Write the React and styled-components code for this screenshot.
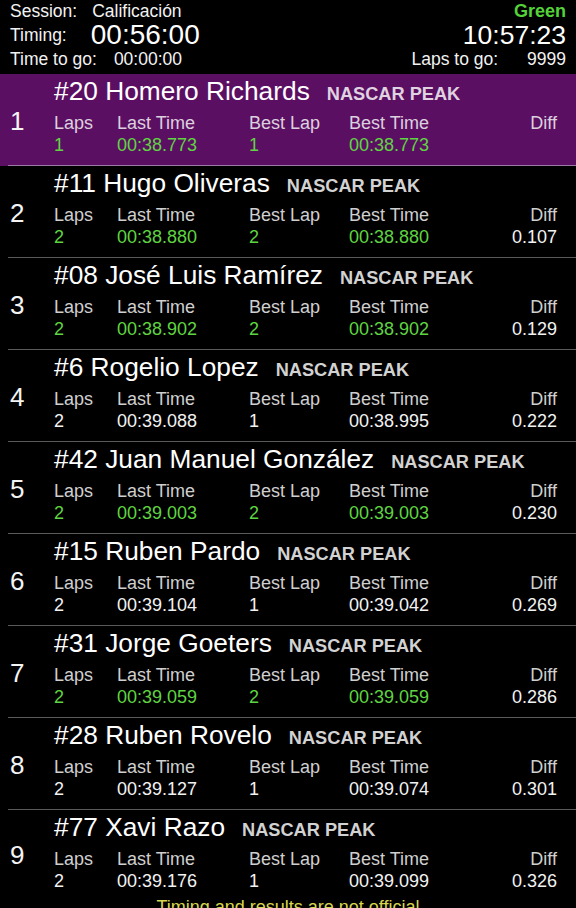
import React from "react";
import styled, { createGlobalStyle } from "styled-components";

const GlobalStyle = createGlobalStyle`
  html, body {
    margin: 0;
    padding: 0;
    background: #000;
    overflow: hidden;
  }
  body {
    font-family: "Liberation Sans", Arial, Helvetica, sans-serif;
    color: #fff;
  }
`;

const Screen = styled.div`
  width: 576px;
  height: 908px;
  background: #000;
  overflow: hidden;
`;

const Header = styled.header`
  display: flex;
  justify-content: space-between;
  padding: 0 10px 4px 10px;
  height: 70px;
`;

const HeaderCol = styled.div`
  display: flex;
  flex-direction: column;
  align-items: ${(p) => (p.$right ? "flex-end" : "flex-start")};
`;

const HeaderLine = styled.div`
  display: flex;
  align-items: center;
  gap: ${(p) => p.$gap || 0}px;
  height: ${(p) => (p.$big ? 26 : 22)}px;
  font-size: 17.5px;
  line-height: 22px;
  color: #f2f2f2;
  white-space: nowrap;
`;

const FlagText = styled.span`
  color: #55d23a;
  font-weight: bold;
  font-size: 18px;
`;

const BigClock = styled.span`
  font-size: ${(p) => p.$size}px;
  line-height: 26px;
  color: #fff;
`;

const Row = styled.div`
  background: ${(p) => (p.$leader ? "#5b0f63" : "#000")};
  padding-left: 8px;
`;

const RowInner = styled.div`
  display: grid;
  grid-template-columns: 46px 1fr;
  height: ${(p) => (p.$last ? 86 : 91)}px;
  border-bottom: ${(p) =>
    p.$last ? "none" : `1px solid ${p.$leader ? "#9a7aa2" : "#5a5a5a"}`};
`;

const Position = styled.div`
  display: flex;
  align-items: center;
  padding: 4px 0 0 2px;
  font-size: 26px;
  color: #f4f4f4;
`;

const Content = styled.div`
  display: flex;
  flex-direction: column;
  padding-top: 3px;
`;

const NameLine = styled.div`
  display: flex;
  align-items: baseline;
  gap: 17px;
  height: 28px;
  line-height: 28px;
  margin-bottom: 7px;
  white-space: nowrap;
`;

const DriverName = styled.span`
  font-size: 26.3px;
  color: #fff;
`;

const Team = styled.span`
  font-size: 18.2px;
  font-weight: bold;
  color: ${(p) => (p.$leader ? "rgba(255,255,255,0.82)" : "#d2d2d2")};
`;

const StatGrid = styled.div`
  display: grid;
  grid-template-columns: 63px 132px 100px 1fr 100px;
  padding-right: 19px;
  font-size: 18px;
  line-height: 22px;
  white-space: nowrap;
`;

const Label = styled.span`
  color: ${(p) => (p.$leader ? "#dcd0de" : "#cfcfcf")};
  text-align: ${(p) => (p.$right ? "right" : "left")};
`;

const Value = styled.span`
  color: ${(p) => (p.$green ? "#5fd442" : "#f2f2f2")};
  text-align: ${(p) => (p.$right ? "right" : "left")};
  min-height: 22px;
`;

const Footer = styled.div`
  text-align: center;
  font-size: 18px;
  line-height: 22px;
  color: #d9d64f;
`;

const rows = [
  { pos: 1, name: "#20 Homero Richards", laps: "1", last: "00:38.773", bestLap: "1", best: "00:38.773", diff: "", green: true },
  { pos: 2, name: "#11 Hugo Oliveras", laps: "2", last: "00:38.880", bestLap: "2", best: "00:38.880", diff: "0.107", green: true },
  { pos: 3, name: "#08 José Luis Ramírez", laps: "2", last: "00:38.902", bestLap: "2", best: "00:38.902", diff: "0.129", green: true },
  { pos: 4, name: "#6 Rogelio Lopez", laps: "2", last: "00:39.088", bestLap: "1", best: "00:38.995", diff: "0.222", green: false },
  { pos: 5, name: "#42 Juan Manuel González", laps: "2", last: "00:39.003", bestLap: "2", best: "00:39.003", diff: "0.230", green: true },
  { pos: 6, name: "#15 Ruben Pardo", laps: "2", last: "00:39.104", bestLap: "1", best: "00:39.042", diff: "0.269", green: false },
  { pos: 7, name: "#31 Jorge Goeters", laps: "2", last: "00:39.059", bestLap: "2", best: "00:39.059", diff: "0.286", green: true },
  { pos: 8, name: "#28 Ruben Rovelo", laps: "2", last: "00:39.127", bestLap: "1", best: "00:39.074", diff: "0.301", green: false },
  { pos: 9, name: "#77 Xavi Razo", laps: "2", last: "00:39.176", bestLap: "1", best: "00:39.099", diff: "0.326", green: false },
];

function DriverRow({ r, last }) {
  const leader = r.pos === 1;
  return (
    <Row $leader={leader}>
      <RowInner $leader={leader} $last={last}>
        <Position>{r.pos}</Position>
        <Content>
          <NameLine>
            <DriverName>{r.name}</DriverName>
            <Team $leader={leader}>NASCAR PEAK</Team>
          </NameLine>
          <StatGrid>
            <Label $leader={leader}>Laps</Label>
            <Label $leader={leader}>Last Time</Label>
            <Label $leader={leader}>Best Lap</Label>
            <Label $leader={leader}>Best Time</Label>
            <Label $leader={leader} $right>Diff</Label>
            <Value $green={r.green}>{r.laps}</Value>
            <Value $green={r.green}>{r.last}</Value>
            <Value $green={r.green}>{r.bestLap}</Value>
            <Value $green={r.green}>{r.best}</Value>
            <Value $right>{r.diff}</Value>
          </StatGrid>
        </Content>
      </RowInner>
    </Row>
  );
}

export default function App() {
  return (
    <>
      <GlobalStyle />
      <Screen>
        <Header>
          <HeaderCol>
            <HeaderLine $gap={15}>
              <span>Session:</span>
              <span>Calificación</span>
            </HeaderLine>
            <HeaderLine $big $gap={24}>
              <span>Timing:</span>
              <BigClock $size={28}>00:56:00</BigClock>
            </HeaderLine>
            <HeaderLine $gap={17}>
              <span>Time to go:</span>
              <span>00:00:00</span>
            </HeaderLine>
          </HeaderCol>
          <HeaderCol $right>
            <HeaderLine>
              <FlagText>Green</FlagText>
            </HeaderLine>
            <HeaderLine $big>
              <BigClock $size={26.5}>10:57:23</BigClock>
            </HeaderLine>
            <HeaderLine $gap={29}>
              <span>Laps to go:</span>
              <span>9999</span>
            </HeaderLine>
          </HeaderCol>
        </Header>
        {rows.map((r, i) => (
          <DriverRow key={r.pos} r={r} last={i === rows.length - 1} />
        ))}
        <Footer>Timing and results are not official</Footer>
      </Screen>
    </>
  );
}
